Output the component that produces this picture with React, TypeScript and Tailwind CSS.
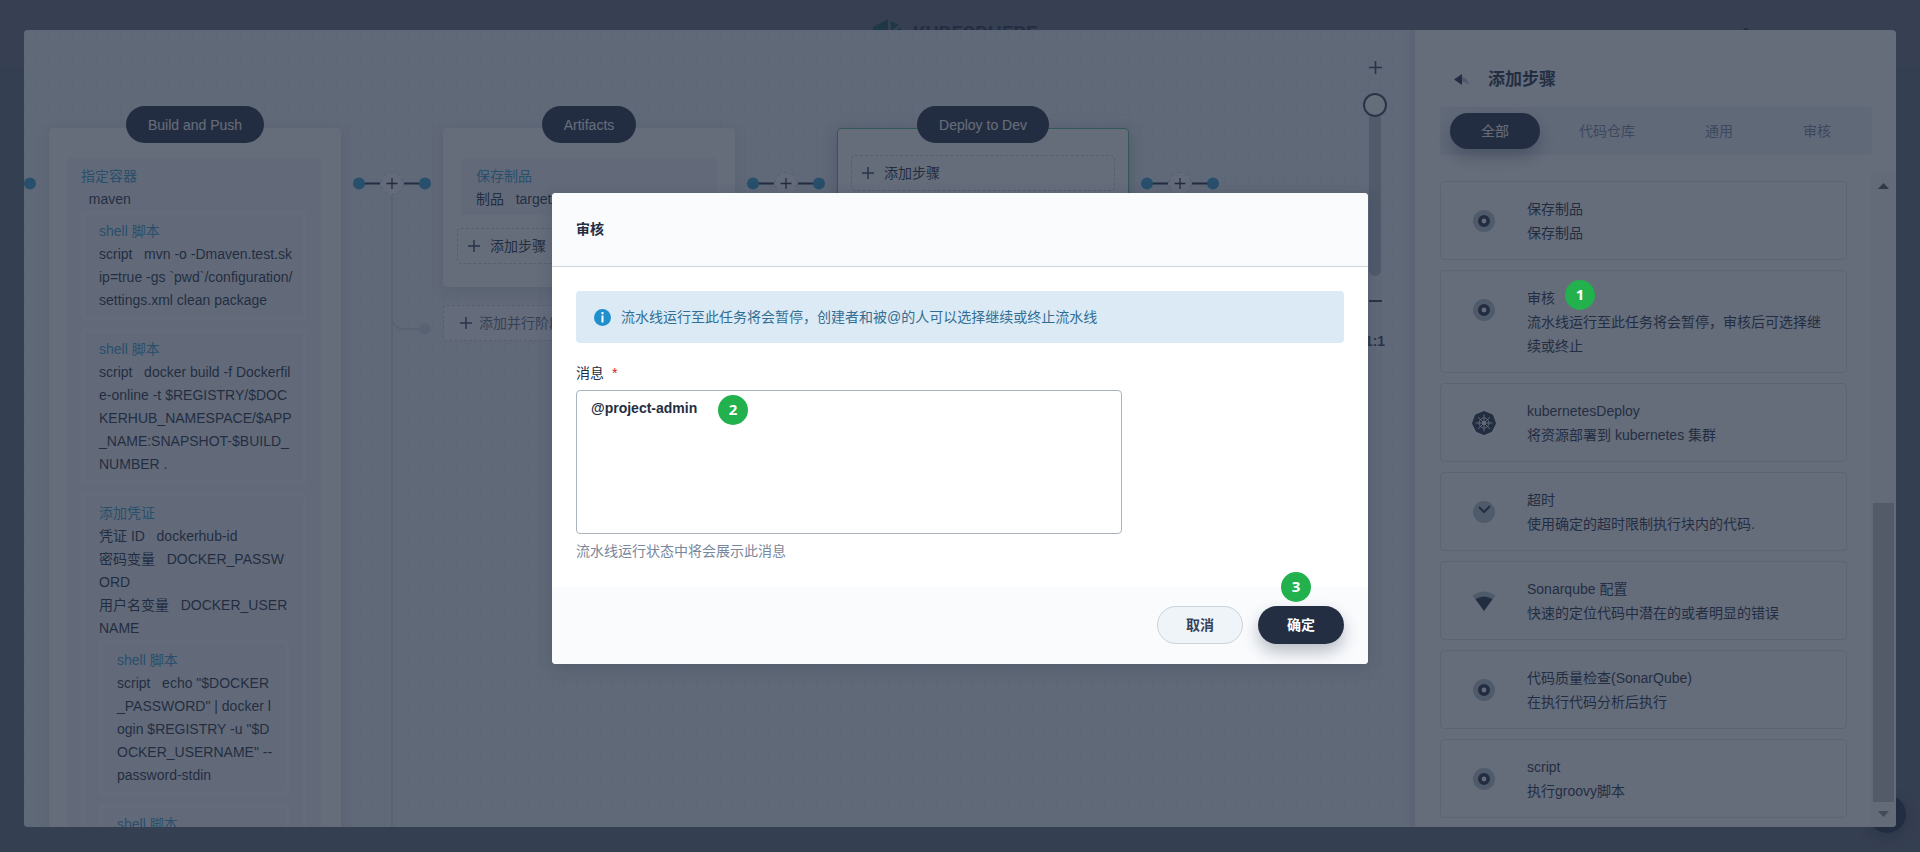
import type { ReactNode } from 'react';

function PlusIcon({ size = 12 }: { size?: number }) {
  return (
    <svg width={size} height={size} viewBox="0 0 12 12" className="shrink-0" stroke="#36435c" strokeWidth="1.5" aria-hidden="true">
      <path d="M6 0v12M0 6h12" />
    </svg>
  );
}

function Lines({ title, rows }: { title: string; rows: string[] }) {
  return (
    <>
      <p className="text-[#329dce]">{title}</p>
      {rows.map((row) => (
        <p key={row}>{row}</p>
      ))}
    </>
  );
}

function NestedStep({ title, rows, children }: { title: string; rows: string[]; children?: ReactNode }) {
  return (
    <div className="rounded-sm border-4 border-[#fafbfd] px-[14px] pt-[5px] pb-1">
      <Lines title={title} rows={rows} />
      {children}
    </div>
  );
}

function StageCard({ name, active = false, children }: { name: string; active?: boolean; children: ReactNode }) {
  return (
    <section
      className={
        active
          ? 'flow-root rounded border border-[#55bc8a] bg-white px-[13px] pb-[23px] shadow-[0_4px_16px_rgba(39,45,59,0.3)]'
          : 'flow-root rounded border border-white bg-white px-[13px] pb-[22px] shadow-[0_4px_16px_rgba(39,45,59,0.12)]'
      }
    >
      <h3 className="-mt-[23px] flex justify-center">
        <span className="flex h-[37px] items-center rounded-full bg-[#242e42] px-[22px] text-sm text-white">{name}</span>
      </h3>
      {children}
    </section>
  );
}

function AddStepButton() {
  return (
    <button type="button" className="flex h-9 w-full items-center gap-[10px] rounded border border-dashed border-[#ccd3db] pl-[10px] text-sm">
      <PlusIcon />
      添加步骤
    </button>
  );
}

function Connector({ branch = false }: { branch?: boolean }) {
  return (
    <svg className="h-full w-[102px] shrink-0" aria-hidden="true">
      {branch && (
        <g stroke="#d8dee5" strokeWidth="2" fill="none">
          <line x1="51" y1="166" x2="51" y2="100%" />
          <path d="M51 286Q51 299 65 299H80" />
          <circle cx="84" cy="299" r="5.500" fill="#d8dee5" stroke="none" />
        </g>
      )}
      <path d="M18 153.500H39M63 153.500H84" stroke="#242e42" strokeWidth="2" />
      <circle cx="18" cy="153.500" r="6" fill="#329dce" />
      <circle cx="84" cy="153.500" r="6" fill="#329dce" />
      <circle cx="51" cy="153.500" r="11" fill="#fafbfd" stroke="#ccd3db" strokeDasharray="4 3" />
      <path d="M51 148v11M45.500 153.500h11" stroke="#242e42" strokeWidth="1.300" />
    </svg>
  );
}

function PipelineCanvas() {
  return (
    <div className="relative flex min-w-0 flex-1 overflow-hidden bg-[#eff4f9] bg-[linear-gradient(#e8eef4_1px,transparent_1px),linear-gradient(90deg,#e8eef4_1px,transparent_1px)] bg-[size:12px_12px] text-sm leading-[23px]">
      <svg className="h-full w-[25px] shrink-0" aria-hidden="true">
        <path d="M0 153.500H4" stroke="#242e42" strokeWidth="2" />
        <circle cx="6" cy="153.500" r="6" fill="#329dce" />
      </svg>
      <div className="w-[292px] shrink-0 pt-[98px]">
        <StageCard name="Build and Push">
          <div className="mx-1 mt-[15px] mr-[6px] rounded-sm bg-[#f5f7fa] px-[14px] pt-[7px] pb-[15px] whitespace-pre">
            <Lines title="指定容器" rows={['  maven']} />
            <div className="flex flex-col gap-[9px]">
              <NestedStep
                title="shell 脚本"
                rows={['script   mvn -o -Dmaven.test.sk', 'ip=true -gs `pwd`/configuration/', 'settings.xml clean package']}
              />
              <NestedStep
                title="shell 脚本"
                rows={[
                  'script   docker build -f Dockerfil',
                  'e-online -t $REGISTRY/$DOC',
                  'KERHUB_NAMESPACE/$APP',
                  '_NAME:SNAPSHOT-$BUILD_',
                  'NUMBER .',
                ]}
              />
              <NestedStep
                title="添加凭证"
                rows={['凭证 ID   dockerhub-id', '密码变量   DOCKER_PASSW', 'ORD', '用户名变量   DOCKER_USER', 'NAME']}
              >
                <div className="flex flex-col gap-[9px]">
                  <NestedStep
                    title="shell 脚本"
                    rows={['script   echo "$DOCKER', '_PASSWORD" | docker l', 'ogin $REGISTRY -u "$D', 'OCKER_USERNAME" --', 'password-stdin']}
                  />
                  <NestedStep title="shell 脚本" rows={[]} />
                </div>
              </NestedStep>
            </div>
          </div>
        </StageCard>
      </div>
      <Connector branch />
      <div className="w-[292px] shrink-0 pt-[98px]">
        <StageCard name="Artifacts">
          <div className="mx-1 mt-[15px] mb-[13px] rounded-sm bg-[#f5f7fa] px-[15px] pt-[7px] pb-1 whitespace-pre">
            <Lines title="保存制品" rows={['制品   target/*.jar']} />
          </div>
          <AddStepButton />
        </StageCard>
        <button
          type="button"
          className="mt-[18px] flex h-9 w-full items-center gap-[7px] rounded border border-dashed border-[#ccd3db] bg-[#fafbfd] pl-4 text-[#5f708a]"
        >
          <PlusIcon />
          添加并行阶段
        </button>
      </div>
      <Connector />
      <div className="w-[292px] shrink-0 pt-[98px]">
        <StageCard name="Deploy to Dev" active>
          <div className="mt-3 pb-10">
            <AddStepButton />
          </div>
        </StageCard>
      </div>
      <Connector />
      <div className="absolute top-[30px] right-[28px] flex w-6 flex-col items-center">
        <button type="button" aria-label="放大" className="flex h-[14px] items-center">
          <PlusIcon size={13} />
        </button>
        <div className="mt-[19px] size-6 rounded-full border-2 border-[#36435c] bg-white" />
        <div className="h-[159px] w-3 rounded-b-md bg-[#b6c2cd]" />
        <button type="button" aria-label="缩小" className="mt-6 h-[2px] w-[13px] bg-[#36435c]" />
        <button type="button" className="mt-7 font-bold text-[#36435c]">
          1:1
        </button>
      </div>
    </div>
  );
}

function TargetIcon() {
  return (
    <svg width="24" height="24" viewBox="0 0 24 24" aria-hidden="true">
      <circle cx="12" cy="12" r="11" fill="#b6c2cd" />
      <circle cx="12" cy="12" r="4.200" fill="#fff" stroke="#242e42" strokeWidth="3.600" />
    </svg>
  );
}

function HelmIcon() {
  return (
    <svg width="24" height="24" viewBox="0 0 24 24" aria-hidden="true">
      <path d="M12 .5l8.500 3.500 3 8.500-4 8-7.500 3-7.500-3-4-8L3.500 4z" fill="#242e42" stroke="#242e42" strokeLinejoin="round" />
      <g stroke="#fff" strokeWidth=".9" fill="none">
        <circle cx="12" cy="12" r="5" />
        <circle cx="12" cy="12" r="1.600" />
        <path d="M12 3.500v17M3.500 12h17M6 6l12 12M18 6L6 18" />
      </g>
    </svg>
  );
}

function ClockIcon() {
  return (
    <svg width="24" height="24" viewBox="0 0 24 24" aria-hidden="true">
      <circle cx="12" cy="12" r="11" fill="#b6c2cd" />
      <path d="M7 7l5 5 6-6" fill="none" stroke="#242e42" strokeWidth="2" />
    </svg>
  );
}

function SignalIcon() {
  return (
    <svg width="24" height="24" viewBox="0 0 24 24" aria-hidden="true">
      <path d="M.5 6.500Q12-1.500 23.500 6.500L12 22z" fill="#b6c2cd" />
      <path d="M3.500 10Q12 5 20.500 10L12 22z" fill="#242e42" />
    </svg>
  );
}

const steps: { title: string; text: string; icon: ReactNode }[] = [
  { title: '保存制品', text: '保存制品', icon: <TargetIcon /> },
  { title: '审核', text: '流水线运行至此任务将会暂停，审核后可选择继续或终止', icon: <TargetIcon /> },
  { title: 'kubernetesDeploy', text: '将资源部署到 kubernetes 集群', icon: <HelmIcon /> },
  { title: '超时', text: '使用确定的超时限制执行块内的代码.', icon: <ClockIcon /> },
  { title: 'Sonarqube 配置', text: '快速的定位代码中潜在的或者明显的错误', icon: <SignalIcon /> },
  { title: '代码质量检查(SonarQube)', text: '在执行代码分析后执行', icon: <TargetIcon /> },
  { title: 'script', text: '执行groovy脚本', icon: <TargetIcon /> },
];

function StepPanel() {
  return (
    <aside className="relative flex w-[481px] shrink-0 flex-col bg-white shadow-[-4px_0_8px_rgba(36,46,66,0.12)]">
      <header className="flex items-center gap-[18px] pt-[37px] pl-[39px]">
        <button type="button" aria-label="返回" className="flex w-4">
          <svg width="16" height="12" viewBox="0 0 16 12" aria-hidden="true">
            <path d="M7 3Q14 3 14.500 11Q12 7.500 7 7.500z" fill="#b6c2cd" />
            <path d="M0 5.500L8 0v11z" fill="#242e42" />
          </svg>
        </button>
        <h2 className="text-[17px] leading-[26px] font-bold">添加步骤</h2>
      </header>
      <nav className="mr-6 ml-[25px] mt-[14px] flex h-12 shrink-0 items-center justify-between rounded bg-[#eff4f9] px-[10px] text-sm text-[#79879c]">
        <button type="button" className="h-9 rounded-full bg-[#242e42] px-[31px] text-white shadow-[0_8px_16px_rgba(36,46,66,0.35)]">
          全部
        </button>
        <button type="button" className="h-9 px-[31px]">代码仓库</button>
        <button type="button" className="h-9 px-[31px]">通用</button>
        <button type="button" className="h-9 px-[31px]">审核</button>
      </nav>
      <div className="mt-[18px] flex min-h-0 flex-1">
        <ul className="mr-6 ml-[25px] flex flex-1 flex-col gap-[10px] overflow-hidden pt-2">
          {steps.map((step) => (
            <li key={step.title} className="flex shrink-0 gap-[31px] rounded border border-[#dfe5ea] pt-[15px] pr-[14px] pb-[14px] pl-[31px] text-sm leading-6">
              <span className="flex h-12 w-6 shrink-0 items-center">{step.icon}</span>
              <div>
                <h3>{step.title}</h3>
                <p>{step.text}</p>
              </div>
            </li>
          ))}
        </ul>
        <div className="flex w-[25px] flex-col items-center bg-[#f7f7f8] py-[10px]" aria-hidden="true">
          <svg width="11" height="6" viewBox="0 0 11 6">
            <path d="M0 6L5.500 0 11 6z" fill="#505050" />
          </svg>
          <div className="mt-auto mb-[9px] h-[299px] w-[21px] bg-[#c1c1c1]" />
          <svg width="11" height="6" viewBox="0 0 11 6">
            <path d="M0 0L5.500 6 11 0z" fill="#8c8c8c" />
          </svg>
        </div>
      </div>
    </aside>
  );
}

function ReviewDialog() {
  return (
    <div role="dialog" aria-labelledby="dialog-title" className="w-[816px] overflow-hidden rounded bg-white text-sm shadow-[0_4px_16px_rgba(36,46,66,0.2)]">
      <header className="flex h-[74px] items-center border-b border-[#ccd3db] bg-[#f9fbfd] px-6 pb-[2px]">
        <h2 id="dialog-title" className="font-bold">审核</h2>
      </header>
      <div className="px-6 pt-6 pb-[26px]">
        <div className="flex h-[52px] items-center gap-[10px] rounded bg-[#dceaf5] px-[18px] text-[#326e93]">
          <svg width="17" height="17" viewBox="0 0 17 17" aria-hidden="true">
            <circle cx="8.500" cy="8.500" r="8.500" fill="#1f8fcd" />
            <path d="M8.500 3v2.200M8.500 6.500v7" stroke="#fff" strokeWidth="2" />
          </svg>
          <p>流水线运行至此任务将会暂停，创建者和被@的人可以选择继续或终止流水线</p>
        </div>
        <label htmlFor="message" className="mt-5 block leading-5">
          消息 <span className="ml-1 text-[#ca2621]">*</span>
        </label>
        <textarea
          id="message"
          defaultValue="@project-admin"
          className="mt-[7px] block h-36 w-[546px] resize-none rounded border border-[#abb4be] bg-white px-[14px] py-[7px] leading-5 font-semibold outline-none"
        />
        <p className="mt-[7px] leading-5 text-[#79879c]">流水线运行状态中将会展示此消息</p>
      </div>
      <footer className="flex items-center justify-end gap-[15px] bg-[#f9fbfd] px-6 pt-[19px] pb-5 font-bold">
        <button type="button" className="h-[38px] w-[86px] rounded-full border border-[#ccd3db] bg-[#eff4f9] text-[#36435c]">
          取消
        </button>
        <button type="button" className="h-[38px] w-[86px] rounded-full bg-[#242e42] text-white shadow-[0_8px_16px_rgba(36,46,66,0.3)]">
          确定
        </button>
      </footer>
    </div>
  );
}

function Marker({ value, className }: { value: number; className: string }) {
  return (
    <span
      className={
        'absolute flex size-[30px] items-center justify-center rounded-full bg-[#22b14c] pb-[2px] font-["Open_Sans",sans-serif] text-[15px] font-bold text-white ' +
        className
      }
    >
      {value}
    </span>
  );
}

export default function App() {
  return (
    <div className="relative h-screen min-h-[700px] overflow-hidden bg-[#eff4f9] font-['Liberation_Sans','Noto_Sans_CJK_SC',sans-serif] text-[#242e42]">
      <header className="flex h-[68px] items-center justify-center bg-[#f9fbfd] pr-[10px]">
        <div className="flex items-center gap-2">
          <svg width="32" height="34" viewBox="0 0 32 34" aria-hidden="true">
            <path d="M0 10L15 2v14H0zM18 4l8 4-8 6z" fill="#00a971" />
            <path d="M28 10v6H19zM0 20h15v14L0 25zM19 19l9 6-10 6z" fill="#00a971" />
          </svg>
          <span className="font-[Roboto,sans-serif] text-xl leading-6 font-bold text-[#36435c]">KUBESPHERE</span>
        </div>
      </header>
      <div className="absolute top-7 right-[171px] size-[6px] rounded-full bg-[#242e42]" />
      <div className="absolute right-[14px] bottom-[19px] size-[38px] rounded-full bg-[#242e42] shadow-[0_4px_16px_rgba(36,46,66,0.6)]" />

      <div className="absolute inset-0 flex bg-[#242e42]/70 px-6 pt-[30px] pb-[25px]">
        <div className="flex min-w-0 flex-1 overflow-hidden rounded">
          <PipelineCanvas />
          <StepPanel />
        </div>
      </div>

      <div className="absolute inset-0 flex items-start justify-center bg-[#242e42]/70 pt-[193px]">
        <div className="relative">
          <ReviewDialog />
          <Marker value={2} className="top-[202px] left-[166px]" />
          <Marker value={3} className="top-[379px] right-[57px]" />
        </div>
      </div>
      <Marker value={1} className="top-[280px] right-[325px]" />
    </div>
  );
}
